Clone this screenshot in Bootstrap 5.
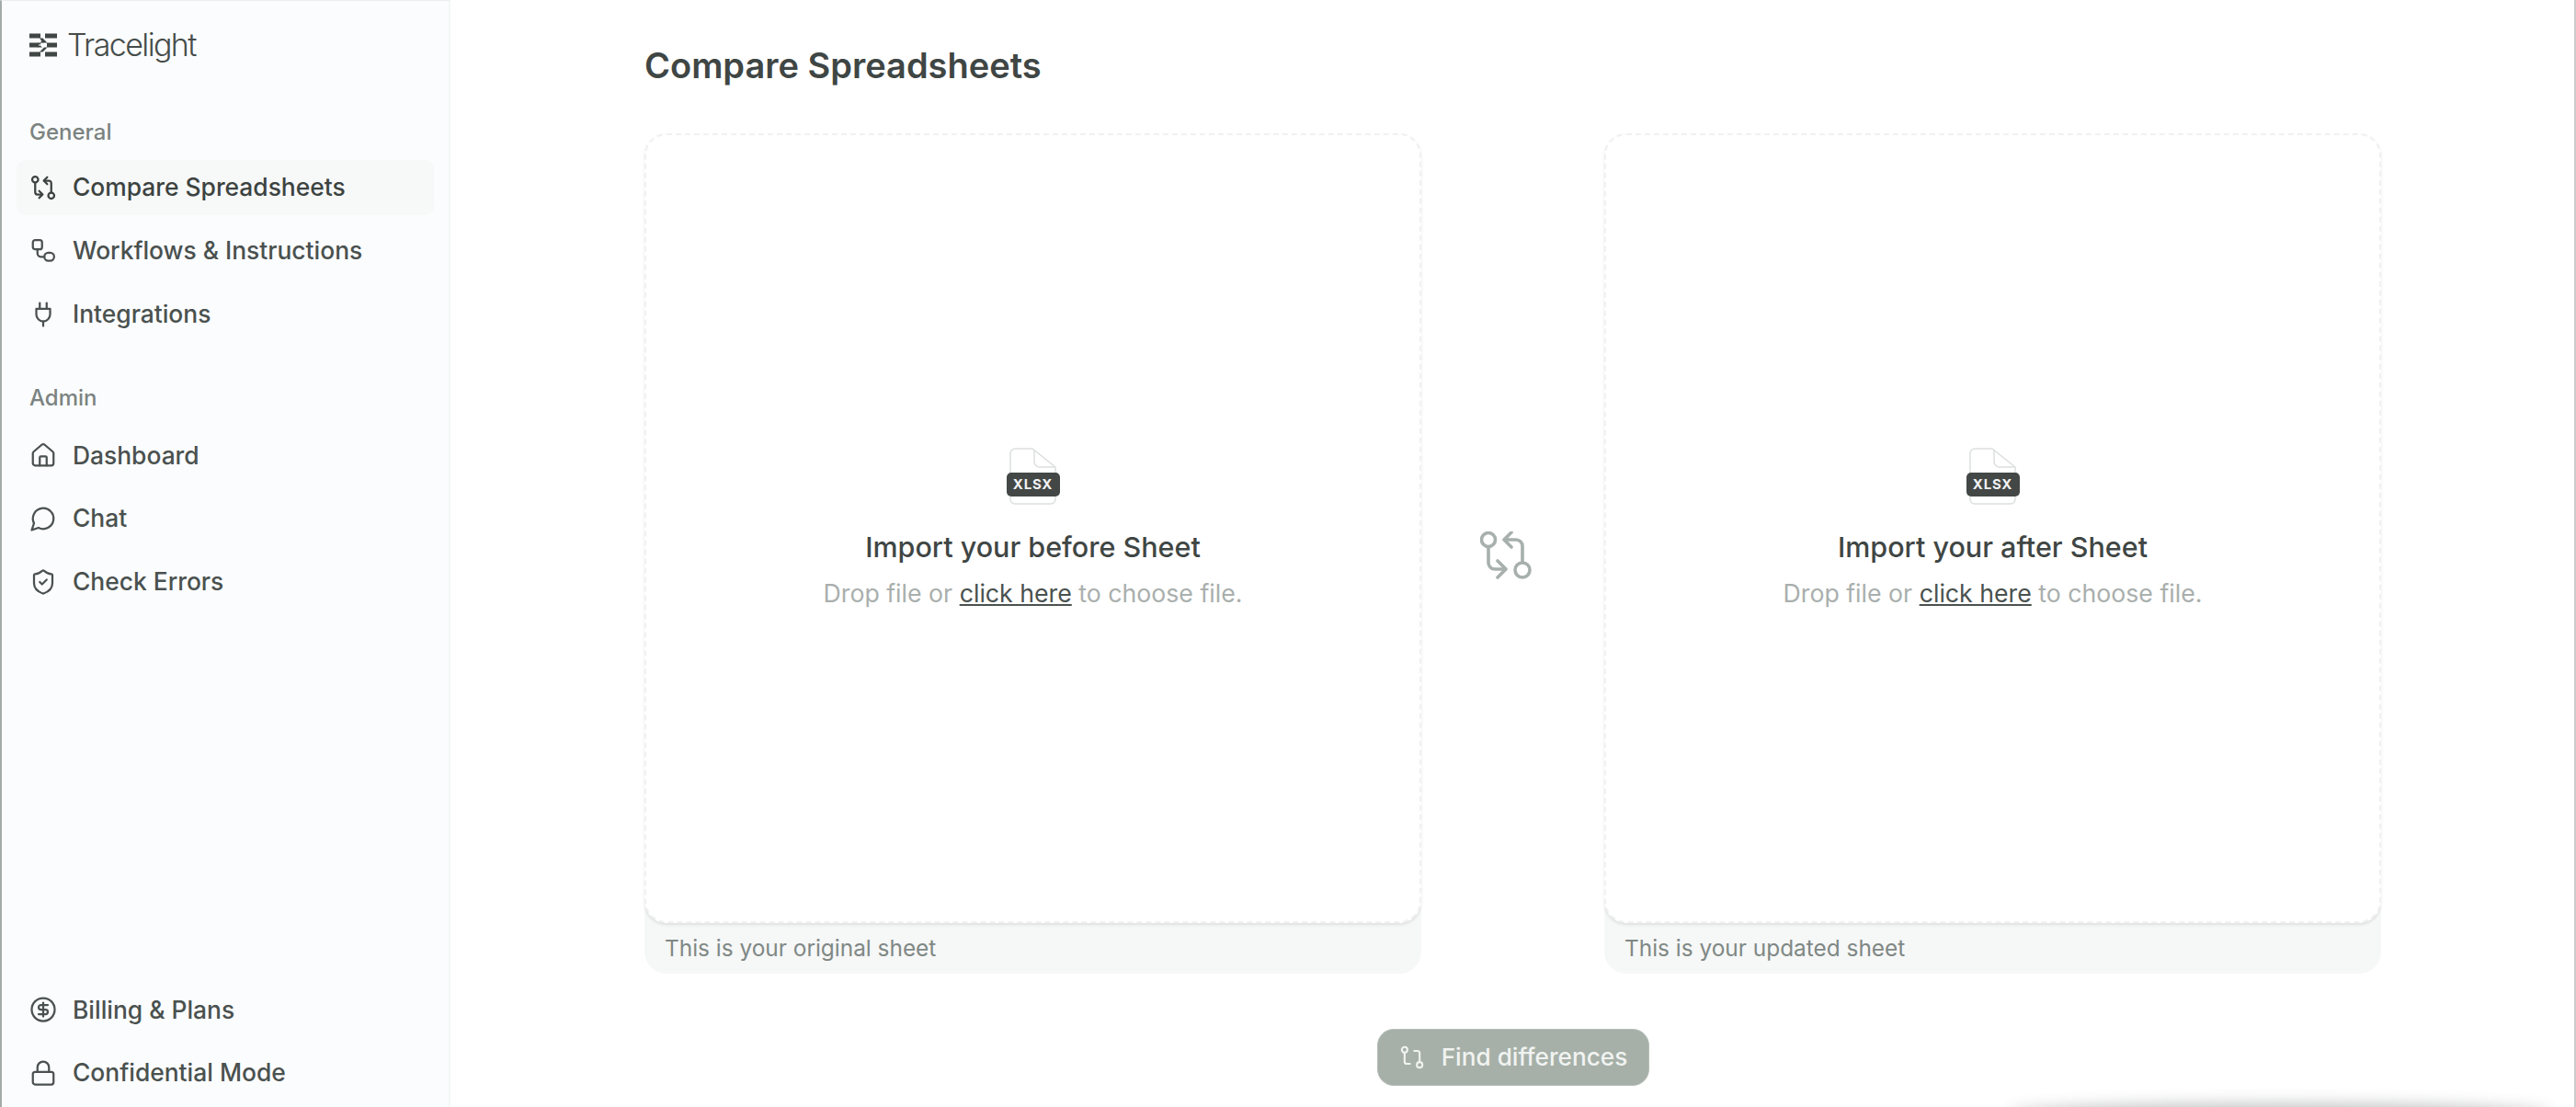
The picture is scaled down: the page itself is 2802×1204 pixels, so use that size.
<!DOCTYPE html>
<html lang="en">
<head>
<meta charset="UTF-8" />
<title>Tracelight - Compare Spreadsheets</title>
<link href="https://cdn.jsdelivr.net/npm/bootstrap@5.3.3/dist/css/bootstrap.min.css" rel="stylesheet">
<style>
    html, body { height: 100%; }
    body {
    background-color: #fff;
    color: #3f4644;
    font-family: Inter, "Liberation Sans", sans-serif;
    overflow: hidden;
    border-right: 2px solid #c9cccb;
    }
    .app-shell { height: 100vh; position: relative; }
    .side-panel {
    width: 490px;
    flex: none;
    background-color: #fbfcfd;
    border-left: 2px solid #a3aaa8;
    border-right: 2px solid #f5f6f6;
    border-top: 1px solid #eceeed;
    padding: 0 16px 0 16px;
    }
    .brand { height: 96px; padding: 0 0 0 14px; gap: 11px; margin-bottom: 4px; }
    .brand-name { font-size: 34px; font-weight: 300; letter-spacing: -1.6px; color: #454c4a; line-height: 1; }
    .side-label { font-size: 24px; font-weight: 500; color: #7b8381; line-height: 30px; padding-left: 14px; margin-bottom: 15px; margin-top: 28px; }
    .side-label.label-admin { margin-top: 38px; margin-bottom: 17px; }
    .side-link {
    height: 60px;
    margin-bottom: 8.8px;
    padding-left: 14px;
    gap: 17px;
    font-size: 26.4px;
    font-weight: 500;
    color: #4a514f;
    border-radius: 10px;
    text-decoration: none;
    }
    .side-link.active { background-color: #f7f8f8; color: #3c4341; }
    .side-link svg, .btn-find svg { flex: none; fill: none; stroke: currentColor; stroke-width: 1.8; stroke-linecap: round; stroke-linejoin: round; }
    .side-foot { margin-top: auto; margin-bottom: -2px; }
    .page-title { font-size: 38px; font-weight: 600; color: #3f4644; line-height: 44px; margin: 0; padding-top: 49px; height: 145px; }
    .main-pane { padding-left: 211px; }
    .drop-wrap { width: 845px; flex: none; background-color: #f6f7f7; border-radius: 24px; }
    .drop-zone {
    height: 859px;
    background-color: #fff;
    border: 2px dashed #f0f1f0;
    border-radius: 24px;
    box-shadow: 0 2px 3px rgba(60, 70, 66, .12);
    }
    .drop-note { height: 55px; padding: 9px 0 0 22px; font-size: 24.4px; color: #7f8885; }
    .drop-title { font-size: 30.500px; font-weight: 500; color: #3f4644; line-height: 36px; margin: 28px 0 14px; }
    .drop-hint { font-size: 26.700px; color: #a9afad; line-height: 36px; margin-bottom: 0; }
    .drop-hint a { color: #4a514f; }
    .swap-slot { width: 199px; flex: none; color: #a7b0ac; padding: 3px 16px 0 0; }
    .swap-slot svg { fill: none; stroke: currentColor; stroke-width: 3.600; stroke-linecap: round; stroke-linejoin: round; }
    .sheet-icon { position: relative; width: 58px; height: 62px; }
    .sheet-tag {
    position: absolute;
    left: 0;
    top: 27px;
    width: 58px;
    height: 26px;
    background-color: #434846;
    color: #f2f3f3;
    border-radius: 5px;
    font-size: 15px;
    font-weight: 700;
    letter-spacing: .8px;
    line-height: 26px;
    text-align: center;
    }
    .btn-find {
    width: 296px;
    height: 62px;
    margin: 60px 0 0 797px;
    background-color: #a6b0a8;
    border: 1px solid #b5bdb7;
    border-radius: 18px;
    color: #f1f3f1;
    font-size: 26.200px;
    font-weight: 500;
    gap: 18px;
    padding: 0;
    }
    .btn-find:hover, .btn-find:focus { background-color: #a6b0a8; color: #f1f3f1; border-color: #b5bdb7; }
    .edge-shade {
    position: absolute;
    left: 2190px;
    right: 30px;
    bottom: -14px;
    height: 14px;
    border-radius: 50%;
    box-shadow: 0 0 16px 4px rgba(70, 76, 74, .32);
    }
</style>
</head>
<body>
<div class="app-shell d-flex">

    <aside class="side-panel d-flex flex-column">
    <div class="brand d-flex align-items-center">
        <svg width="30" height="26" viewBox="0 0 30 26" fill="#3f4644">
        <rect x="0" y="0.500" width="12" height="5"/><rect x="17" y="0.500" width="13" height="5"/>
        <rect x="0" y="10.500" width="10" height="5"/><rect x="19" y="10.500" width="11" height="5"/>
        <rect x="0" y="20.500" width="12" height="5"/><rect x="17" y="20.500" width="13" height="5"/>
        <path d="M11 5.500h3.500l5 5h-5zM9 10.500l2 2.500 2-2.500zM19.500 15.500l-5 5H11l5-5z"/>
        <path d="M9 15.500l2-2.500 3 2.500zM13 8.500l3 2h-4z"/>
        </svg>
        <span class="brand-name">Tracelight</span>
    </div>

    <div class="side-label">General</div>
    <a href="#" class="side-link active d-flex align-items-center">
        <svg width="30" height="30" viewBox="0 0 24 24"><circle cx="5" cy="5" r="2.600"/><path d="M5 7.600V16a2 2 0 0 0 2 2h4"/><path d="m8.500 15 3 3-3 3"/><circle cx="19" cy="19" r="2.600"/><path d="M19 16.400V8a2 2 0 0 0-2-2h-4"/><path d="m15.500 9-3-3 3-3"/></svg>
        Compare Spreadsheets
    </a>
    <a href="#" class="side-link d-flex align-items-center">
        <svg width="30" height="30" viewBox="0 0 24 24"><rect x="3" y="2.500" width="8" height="8" rx="2"/><path d="M7 10.500V14a3 3 0 0 0 3 3h3"/><rect x="13" y="13.500" width="8.500" height="7" rx="3.500"/></svg>
        Workflows &amp; Instructions
    </a>
    <a href="#" class="side-link d-flex align-items-center">
        <svg width="30" height="30" viewBox="0 0 24 24"><path d="M9 2v5"/><path d="M15 2v5"/><path d="M12 18v4"/><path d="M6 7h12v5a6 6 0 0 1-12 0z"/></svg>
        Integrations
    </a>

    <div class="side-label label-admin">Admin</div>
    <a href="#" class="side-link d-flex align-items-center">
        <svg width="30" height="30" viewBox="0 0 24 24"><path d="M3 10.500a2 2 0 0 1 .7-1.500l7-6a2 2 0 0 1 2.600 0l7 6a2 2 0 0 1 .7 1.500V19a2 2 0 0 1-2 2H5a2 2 0 0 1-2-2z"/><path d="M9 21v-7a1 1 0 0 1 1-1h4a1 1 0 0 1 1 1v7"/></svg>
        Dashboard
    </a>
    <a href="#" class="side-link d-flex align-items-center">
        <svg width="30" height="30" viewBox="0 0 24 24"><path d="M7.900 20A9 9 0 1 0 4 16.100L2 22z"/></svg>
        Chat
    </a>
    <a href="#" class="side-link d-flex align-items-center">
        <svg width="30" height="30" viewBox="0 0 24 24"><path d="M20 13c0 5-3.500 7.500-7.700 9a1 1 0 0 1-.6 0C7.500 20.500 4 18 4 13V6a1 1 0 0 1 1-1c2 0 4.500-1.200 6.200-2.700a1.200 1.200 0 0 1 1.600 0C14.500 3.800 17 5 19 5a1 1 0 0 1 1 1z"/><path d="m9 12 2 2 4-4"/></svg>
        Check Errors
    </a>

    <div class="side-foot">
        <a href="#" class="side-link d-flex align-items-center">
        <svg width="30" height="30" viewBox="0 0 24 24"><circle cx="12" cy="12" r="10"/><path d="M16 8h-6a2 2 0 1 0 0 4h4a2 2 0 1 1 0 4H8"/><path d="M12 18V6"/></svg>
        Billing &amp; Plans
        </a>
        <a href="#" class="side-link d-flex align-items-center">
        <svg width="30" height="30" viewBox="0 0 24 24"><rect x="3" y="11" width="18" height="11" rx="2"/><path d="M7 11V7a5 5 0 0 1 10 0v4"/></svg>
        Confidential Mode
        </a>
    </div>
    </aside>

    <main class="main-pane flex-grow-1">
    <h1 class="page-title">Compare Spreadsheets</h1>

    <div class="d-flex">
        <section class="drop-wrap">
        <div class="drop-zone d-flex flex-column align-items-center justify-content-center">
            <div class="sheet-icon">
            <svg width="58" height="62" viewBox="0 0 58 62" fill="none" stroke="#dcdfde" stroke-width="1.500"><path d="M9 61a5 5 0 0 1-5-5V6a5 5 0 0 1 5-5h19l25 20v35a5 5 0 0 1-5 5z"/><path d="M30 2v13a6 6 0 0 0 6 6h16"/></svg>
            <div class="sheet-tag">XLSX</div>
            </div>
            <div class="drop-title">Import your before Sheet</div>
            <p class="drop-hint">Drop file or <a href="#">click here</a> to choose file.</p>
        </div>
        <div class="drop-note">This is your original sheet</div>
        </section>

        <div class="swap-slot d-flex align-items-center justify-content-center">
        <svg width="56" height="52" viewBox="0 0 56 52"><circle cx="9" cy="9" r="7.500"/><path d="M9 16.500V34a7 7 0 0 0 7 7h11"/><path d="m19 32 9 9-9 9"/><circle cx="46" cy="42" r="8"/><path d="M46 34V16a7 7 0 0 0-7-7H27"/><path d="m34 1-8 8 8 8"/></svg>
        </div>

        <section class="drop-wrap">
        <div class="drop-zone d-flex flex-column align-items-center justify-content-center">
            <div class="sheet-icon">
            <svg width="58" height="62" viewBox="0 0 58 62" fill="none" stroke="#dcdfde" stroke-width="1.500"><path d="M9 61a5 5 0 0 1-5-5V6a5 5 0 0 1 5-5h19l25 20v35a5 5 0 0 1-5 5z"/><path d="M30 2v13a6 6 0 0 0 6 6h16"/></svg>
            <div class="sheet-tag">XLSX</div>
            </div>
            <div class="drop-title">Import your after Sheet</div>
            <p class="drop-hint">Drop file or <a href="#">click here</a> to choose file.</p>
        </div>
        <div class="drop-note">This is your updated sheet</div>
        </section>
    </div>

    <button class="btn btn-find d-flex align-items-center justify-content-center">
        <svg width="28" height="28" viewBox="0 0 24 24"><circle cx="5" cy="5" r="2.600"/><path d="M5 7.600V16a2 2 0 0 0 2 2h3"/><circle cx="19" cy="19" r="2.600"/><path d="M19 16.400V8a2 2 0 0 0-2-2h-3"/></svg>
        Find differences
    </button>
    </main>

    <div class="edge-shade"></div>
</div>

<script src="https://cdn.jsdelivr.net/npm/bootstrap@5.3.3/dist/js/bootstrap.bundle.min.js"></script>
</body>
</html>
